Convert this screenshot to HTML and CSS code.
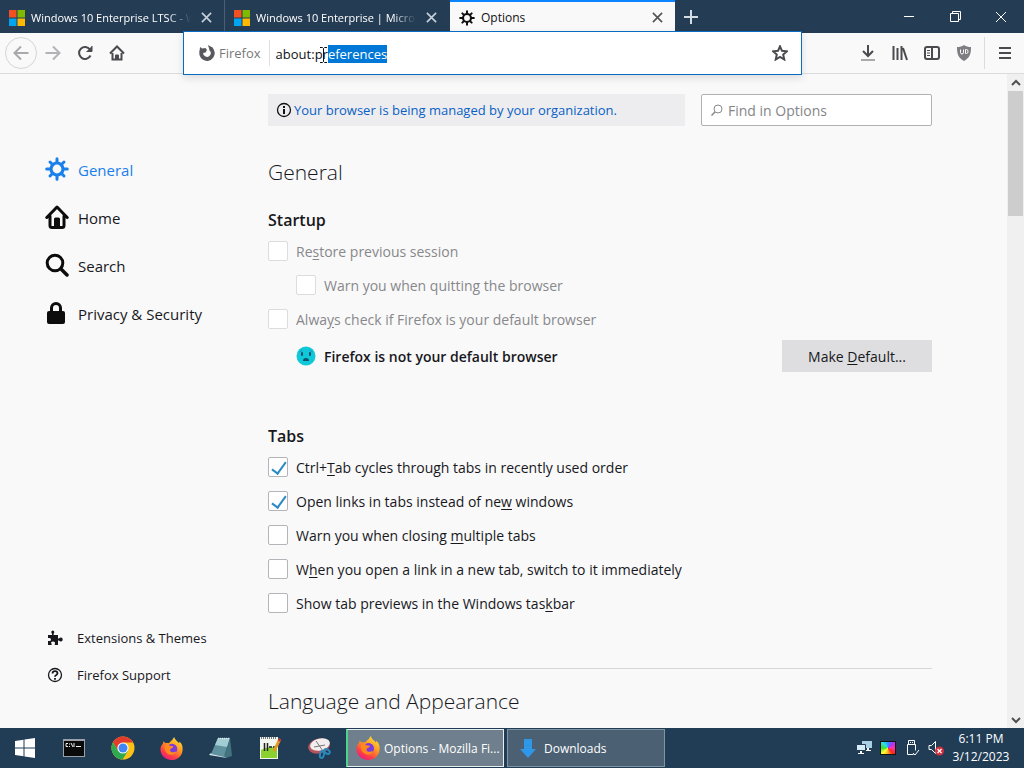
FILE: index.html
```html
<!DOCTYPE html>
<html lang="en">

<head>
  <meta charset="UTF-8">
  <meta name="viewport" content="width=device-width, initial-scale=1.0">
  <title>Options</title>
  <link rel="stylesheet" href="styles.css">
</head>

<body>
  <svg class="symbols" aria-hidden="true">
    <symbol id="ms" viewBox="0 0 16 16">
      <path fill="#f25022" d="M0 0h7.5v7.5H0z"/><path fill="#7fba00" d="M8.500 0H16v7.500H8.500z"/>
      <path fill="#00a4ef" d="M0 8.500h7.500V16H0z"/><path fill="#ffb900" d="M8.500 8.500H16V16H8.500z"/>
    </symbol>
    <symbol id="gear" viewBox="0 0 24 24">
      <g fill="none" stroke="currentColor" stroke-linecap="round">
        <circle cx="12" cy="12" r="6" stroke-width="3.200"/>
        <path stroke-width="3" d="M12 1.700v3M12 19.300v3M1.700 12h3M19.300 12h3M5 5l2 2M17 17l2 2M5 19l2-2M17 7l2-2"/>
      </g>
    </symbol>
    <symbol id="x" viewBox="0 0 12 12">
      <path fill="none" stroke="currentColor" stroke-width="1.800" d="M1 1l10 10M11 1L1 11"/>
    </symbol>
    <symbol id="house" viewBox="0 0 24 24">
      <path fill="none" stroke="currentColor" stroke-width="3" stroke-linecap="round" stroke-linejoin="round" d="M1.800 12.500L12 2l10.200 10.500M5 11v9.500q0 2 2 2h10q2 0 2-2V11"/>
      <path fill="currentColor" d="M9 22v-8q0-1.500 1.500-1.500h3q1.500 0 1.500 1.500v8z"/>
    </symbol>
    <symbol id="firefox" viewBox="0 0 24 24">
      <linearGradient id="fire" x1=".8" y1="0" x2=".2" y2="1">
        <stop offset="0" stop-color="#ffe43a"/><stop offset=".4" stop-color="#ff9a1f"/><stop offset=".75" stop-color="#ff3b4a"/><stop offset="1" stop-color="#e01a8a"/>
      </linearGradient>
      <path fill="url(#fire)" d="M4 4.500c.5 1 1 1.500 2 2 1-.3 2-.3 3 0 1.500-1 2.500-3 4-3.500 0-1 1-2 2-3 .2 3 3 4 5 6.500.3-.6.3-1.200.2-1.800C23 7 24 10 23.500 14 23 20 18 24 12 24S.5 19.500.5 13c0-3 1.200-4.500 2.500-6 .1-1 .4-2 1-2.500z"/>
      <circle cx="12.500" cy="12.500" r="5.500" fill="#7b3be0"/>
      <path fill="#ff8a1c" d="M5 9c2-1.500 4-1 5.500.2 1.500.3 3 .3 3.500 1-.5 1.300-2 1.500-3 2.300-1 1-.6 3 1.600 3.300 2.400.2 3.500-1 4.400-.3-.8 2.500-3.500 3.500-6 3C6.500 18 4 13 5 9z"/>
    </symbol>
  </svg>

  <header class="tab-strip">
    <div class="tab">
      <svg class="favicon"><use href="#ms"/></svg>
      <span class="tab-title faded">Windows 10 Enterprise LTSC - W</span>
      <button type="button" class="tab-close" aria-label="Close tab"><svg><use href="#x"/></svg></button>
    </div>
    <div class="tab">
      <svg class="favicon"><use href="#ms"/></svg>
      <span class="tab-title faded">Windows 10 Enterprise | Micros</span>
      <button type="button" class="tab-close" aria-label="Close tab"><svg><use href="#x"/></svg></button>
    </div>
    <div class="tab active">
      <svg class="favicon"><use href="#gear"/></svg>
      <span class="tab-title">Options</span>
      <button type="button" class="tab-close" aria-label="Close tab"><svg><use href="#x"/></svg></button>
    </div>
    <button type="button" class="new-tab" aria-label="New tab">
      <svg width="14" height="14"><path stroke="currentColor" stroke-width="2" d="M7 0v14M0 7h14"/></svg>
    </button>
    <div class="window-controls">
      <button type="button" aria-label="Minimize"><svg width="10" height="10"><path d="M0 4.500h10"/></svg></button>
      <button type="button" aria-label="Restore"><svg width="11" height="11"><path d="M.5 2.500h8v8h-8zM2.500 2.500v-2h8v8h-2"/></svg></button>
      <button type="button" aria-label="Close"><svg width="10" height="10"><path d="M0 0l10 10M10 0L0 10"/></svg></button>
    </div>
  </header>

  <nav class="toolbar">
    <button type="button" class="tool back" aria-label="Back">
      <svg width="16" height="16"><path d="M15.500 8H1.500M8 1.500L1.500 8 8 14.500"/></svg>
    </button>
    <button type="button" class="tool forward" aria-label="Forward">
      <svg width="16" height="16"><path d="M.5 8h14M8 1.500L14.500 8 8 14.500"/></svg>
    </button>
    <button type="button" class="tool" aria-label="Reload">
      <svg width="16" height="16"><path d="M13 4.500A6 6 0 1 0 13.500 10.500"/><path d="M15 1v5.500H9.500" fill="currentColor" stroke-width="1"/></svg>
    </button>
    <button type="button" class="tool" aria-label="Home">
      <svg width="16" height="16"><path d="M1 8.500L8 1.500l7 7M3.500 8v6.500h9V8"/><path d="M6.500 14v-4h3v4z" fill="currentColor" stroke-width="1"/></svg>
    </button>
    <div class="url-bar">
      <svg class="identity-icon" width="16" height="16" viewBox="0 0 16 16">
        <path fill="none" stroke="currentColor" stroke-width="4" d="M3 5.500A5.700 5.700 0 1 0 11.500 3.700"/>
        <path fill="currentColor" d="M1 2l2 1.500L6.500 3 8 5 6.500 7.500 4 8 .5 7zM9 0l4.500 2.500 1 3.500-4-1z"/>
      </svg>
      <span class="identity-label">Firefox</span>
      <div class="url-field">
        <input type="text" id="url" value="about:preferences" aria-label="Address" spellcheck="false">
        <svg class="ibeam" width="9" height="18"><path d="M1 1.500h2.500l1 1 1-1H8M4.500 2.500v13M1 16.500h2.500l1-1 1 1H8"/></svg>
      </div>
      <button type="button" class="tool star" aria-label="Bookmark this page">
        <svg width="16" height="16"><path d="M8 1.300l2 4.500 4.900.5-3.700 3.300 1.100 4.900L8 12l-4.300 2.500 1.100-4.900L1.100 6.300 6 5.800z"/></svg>
      </button>
    </div>
    <button type="button" class="tool" aria-label="Downloads">
      <svg width="16" height="18"><path d="M8 1v11M3 7l5 5 5-5"/><path stroke="#aaa" d="M1 16h14"/></svg>
    </button>
    <button type="button" class="tool" aria-label="Library">
      <svg width="16" height="16"><path d="M1.500 1v14M5.500 3v12M9.500 1v14M11 3l4 12"/></svg>
    </button>
    <button type="button" class="tool" aria-label="Sidebars">
      <svg width="16" height="16"><rect x="1" y="2" width="14" height="12" rx="2"/><path d="M8 2v12"/><path stroke-width="1" d="M3 5.500h3M3 8h3M3 10.500h3"/></svg>
    </button>
    <button type="button" class="tool" aria-label="uBlock Origin">
      <svg width="16" height="16"><path fill="#7d7d82" stroke="none" d="M8 0c2 1.500 4 2 7 2 0 7-1 10.500-7 14C2 12.500 1 9 1 2c3 0 5-.5 7-2z"/><path stroke="#fff" stroke-width="1" d="M4.500 4.500v3q0 1.500 1.500 1.500T7.500 7.500v-3M9.500 4.500v4h1q1.500 0 1.500-2t-1.500-2z"/></svg>
    </button>
    <button type="button" class="tool menu" aria-label="Open menu">
      <svg width="12" height="14"><path d="M0 2h12M0 7h12M0 12h12"/></svg>
    </button>
  </nav>

  <div class="page">
    <aside class="categories">
      <a href="#general" class="category selected"><svg><use href="#gear"/></svg>General</a>
      <a href="#home" class="category"><svg><use href="#house"/></svg>Home</a>
      <a href="#search" class="category">
        <svg viewBox="0 0 24 24"><g fill="none" stroke="currentColor" stroke-width="3" stroke-linecap="round"><circle cx="10" cy="10" r="7.800"/><path stroke-width="3.500" d="M16 16l6 6"/></g></svg>Search
      </a>
      <a href="#privacy" class="category">
        <svg viewBox="0 0 24 24"><rect x="2" y="10" width="18" height="13" rx="2" fill="currentColor"/><path fill="none" stroke="currentColor" stroke-width="3" d="M6.500 11V7a4.500 4.500 0 0 1 9 0v4"/></svg>Privacy &amp; Security
      </a>
      <div class="support-links">
        <a href="#addons">
          <svg viewBox="0 0 16 16"><path fill="currentColor" d="M1 5h4V3.800Q4.300 3 4.300 2 4.300.5 5.800.5T7.300 2q0 1-.7 1.800V5H11v3.500h1Q12.700 7.500 14 7.500q1.700 0 1.700 2t-1.700 2q-1.300 0-2-1h-1V15H7.800v-1.300Q8.300 13 7.800 12.300T6 11.600t-1.800.7.400 1.400V15H1v-4h1.500q1.500 0 1.500-1.500T2.500 8H1z"/></svg>Extensions &amp; Themes
        </a>
        <a href="#support">
          <svg viewBox="0 0 16 16"><g fill="none" stroke="currentColor"><circle cx="8" cy="8" r="6.500" stroke-width="1.300"/><path stroke-width="1.800" d="M5.500 6.500Q5.600 4.200 8 4.200t2.500 2.100Q10.500 7.500 9 8.200 8 8.700 8 9.800M8 11v1.700"/></g></svg>Firefox Support
        </a>
      </div>
    </aside>

    <main class="pane">
      <div class="pane-top">
        <div class="policy-notice">
          <svg width="16" height="16" viewBox="0 0 16 16"><circle cx="8" cy="8" r="6.500" fill="none" stroke="#111" stroke-width="1.300"/><path stroke="#111" stroke-width="2" d="M8 7v5M8 4v2"/></svg>
          <a href="#policies">Your browser is being managed by your organization.</a>
        </div>
        <label class="find">
          <svg width="12" height="12"><g fill="none" stroke="#888"><circle cx="7" cy="5" r="4"/><path stroke-width="1.500" d="M4 8l-3.500 3.500"/></g></svg>
          <input type="text" placeholder="Find in Options" aria-label="Find in Options">
        </label>
      </div>

      <h1 id="general">General</h1>

      <section>
        <h2>Startup</h2>
        <label class="check"><input type="checkbox" disabled><span>Re<u>s</u>tore previous session</span></label>
        <label class="check indent"><input type="checkbox" disabled><span>Warn you when quitting the browser</span></label>
        <label class="check"><input type="checkbox" disabled><span>Alwa<u>y</u>s check if Firefox is your default browser</span></label>
        <div class="default-row">
          <svg width="20" height="20"><circle cx="10" cy="10" r="9.500" fill="#10c9d8"/><path stroke="#14506e" stroke-width="2" stroke-linecap="round" fill="none" d="M6 7v2M14 7v2"/><path fill="#14506e" d="M7 15q0-3 3-3t3 3z"/><path stroke="#1a8fc4" fill="none" d="M3.500 6l3-2M16.500 6l-3-2"/></svg>
          <strong>Firefox is not your default browser</strong>
          <button type="button" class="make-default">Make <u>D</u>efault...</button>
        </div>
      </section>

      <section>
        <h2>Tabs</h2>
        <label class="check"><input type="checkbox" checked><span>Ctrl+<u>T</u>ab cycles through tabs in recently used order</span></label>
        <label class="check"><input type="checkbox" checked><span>Open links in tabs instead of ne<u>w</u> windows</span></label>
        <label class="check"><input type="checkbox"><span>Warn you when closing <u>m</u>ultiple tabs</span></label>
        <label class="check"><input type="checkbox"><span>W<u>h</u>en you open a link in a new tab, switch to it immediately</span></label>
        <label class="check"><input type="checkbox"><span>Show tab previews in the Windows tas<u>k</u>bar</span></label>
      </section>

      <h1 class="divided">Language and Appearance</h1>
    </main>

    <div class="scrollbar">
      <svg width="10" height="16"><path d="M1 10l4-4 4 4"/></svg>
      <div class="thumb"></div>
      <svg width="10" height="16"><path d="M1 6l4 4 4-4"/></svg>
    </div>
  </div>

  <footer class="taskbar">
    <button type="button" class="launcher" aria-label="Start">
      <svg width="20" height="20"><path fill="#fff" d="M0 3l8.500-1.200v7.700H0zM9.500 1.600L20 0v9.500H9.500zM0 10.500h8.500v7.700L0 17zM9.500 10.500H20V20L9.500 18.400z"/></svg>
    </button>
    <button type="button" class="launcher" aria-label="Command Prompt">
      <svg width="22" height="20"><path fill="#9aa1a8" d="M0 1h22v18H0z"/><path fill="#0a0a0a" d="M1 3h20v15H1z"/><path stroke="#eee" fill="none" d="M5 5.500H3v3h2M6.500 5.500v1M6.500 8v1M8 5l2 4M11 5v4M13 8.500h5"/></svg>
    </button>
    <button type="button" class="launcher" aria-label="Google Chrome">
      <svg width="24" height="24" viewBox="0 0 24 24"><circle cx="12" cy="12" r="11.500" fill="#fbc116"/><path fill="#e33b2e" d="M2 6.300A11.500 11.500 0 0 1 22 6.500H12L7 15z"/><path fill="#2da94f" d="M2 6.300A11.500 11.500 0 0 0 11.500 23.500L17 15l-10 0z"/><circle cx="12" cy="12" r="5.600" fill="#fff"/><circle cx="12" cy="12" r="4.500" fill="#4285f4"/></svg>
    </button>
    <button type="button" class="launcher" aria-label="Firefox"><svg width="23" height="23"><use href="#firefox"/></svg></button>
    <button type="button" class="launcher" aria-label="Notepad">
      <svg width="24" height="22"><path fill="#dcecef" d="M0 18l2-2 12 1 4 4z"/><path fill="#5f929e" d="M2 17L9 1h12l-6 19z"/><path fill="#a3cdd4" d="M9 1h12l-3 9-12-2z"/><path fill="#447380" d="M21 1l2 18-6 2-2-1z"/><path stroke="#d5e9ec" stroke-width="1.500" stroke-dasharray="1 1" d="M9 1.500h12"/></svg>
    </button>
    <button type="button" class="launcher" aria-label="Notepad++">
      <svg width="22" height="24"><path fill="#f3f6ef" d="M1 1h18v22H1z"/><path fill="#8bd12f" d="M2 14q8-5 16-2v10H2z"/><path stroke="#777" stroke-dasharray="1 1" stroke-width="2" d="M2 2h16"/><path stroke="#222" stroke-width="1.500" d="M5.500 7v8M8.500 7v8M10 11h3M14 11h3"/><path stroke="#e29a25" stroke-width="3" d="M21 3l-6 12"/><path stroke="#b33" stroke-width="3" d="M21 3l-1 2"/></svg>
    </button>
    <button type="button" class="launcher" aria-label="Snipping Tool">
      <svg width="24" height="24"><ellipse cx="12" cy="10" rx="11" ry="7.500" fill="#b8545c" transform="rotate(-14 12 10)"/><ellipse cx="13" cy="8.500" rx="10" ry="6" fill="#f2eef0" transform="rotate(-14 13 8.500)"/><path stroke="#777" d="M9 5l7 10M7 11l11-2"/><g fill="none" stroke="#2a89bd" stroke-width="2"><ellipse cx="15" cy="18.500" rx="2" ry="3.500" transform="rotate(15 15 18.500)"/><ellipse cx="20" cy="15.500" rx="3" ry="2" transform="rotate(35 20 15.500)"/></g></svg>
    </button>
    <div class="windows">
      <button type="button" class="window current"><svg width="24" height="24"><use href="#firefox"/></svg>Options - Mozilla Fi...</button>
      <button type="button" class="window"><svg width="24" height="24"><path fill="#2f96e8" d="M8 3h8v10h4l-8 9-8-9h4z"/></svg>Downloads</button>
    </div>
    <div class="tray">
      <svg width="16" height="16"><path fill="#a9cfe5" d="M6 1h10v7H6z"/><path fill="#d5ecf7" stroke="#213c55" d="M.5 4.500h9v6h-9z"/><path fill="#fff" d="M4 11h2v2h2v1H2v-1h2zM11 8h2v2h2v1h-5v-1h1z"/></svg>
      <div class="color-icon"></div>
      <svg width="16" height="18"><path fill="none" stroke="#fff" d="M4.500 5.500v-4h6v4M3.500 5.500h8v6M3.500 5.500v10h6M6 3.500h1M8 3.500h1M9 14l2 2 4-5"/></svg>
      <svg width="16" height="16"><path fill="none" stroke="#fff" d="M1 5.500h2.500l4-4v12l-4-4H1z"/><circle cx="11.500" cy="11" r="4.500" fill="#d22f3c"/><path stroke="#fff" stroke-width="1.300" d="M9.500 9l4 4M13.500 9l-4 4"/></svg>
    </div>
    <div class="clock"><span>6:11 PM</span><span>3/12/2023</span></div>
  </footer>

  <script>
    const url = document.getElementById('url');
    url.focus();
    url.setSelectionRange(8, url.value.length);
  </script>
</body>

</html>
```

FILE: styles.css
```css
* {
  box-sizing: border-box;
  margin: 0;
  padding: 0;
  font-family: "Open Sans", "Noto Sans", sans-serif;
}

body {
  display: flex;
  flex-direction: column;
  height: 100vh;
  background: #f9f9fa;
  color: #18181c;
  font-size: 14px;
  overflow: hidden;
}

button {
  display: flex;
  align-items: center;
  justify-content: center;
  border: none;
  background: none;
  color: inherit;
}

a {
  color: inherit;
  text-decoration: none;
}

svg {
  flex: none;
}

.symbols {
  position: absolute;
  width: 0;
  height: 0;
}

/* tabs */
.tab-strip {
  display: flex;
  flex: none;
  height: 33px;
  background: #253d54;
  color: #fff;
}

.tab {
  display: flex;
  align-items: center;
  flex: 0 1 225px;
  min-width: 0;
  padding: 2px 12px 0 9px;
  border-right: 1px solid #4b6074;
}

.tab:nth-child(2) {
  border-right-color: transparent;
}

.tab.active {
  border-top: 2px solid #0a84ff;
  padding-top: 0;
  border-right: none;
  background: #f9f9fa;
  color: #111;
}

.favicon {
  width: 16px;
  height: 16px;
}

.tab-title {
  flex: 1;
  margin: 0 4px 0 6px;
  font-size: 12px;
  white-space: nowrap;
  overflow: hidden;
}

.tab-title.faded {
  font-size: 11px;
  mask-image: linear-gradient(to left, transparent 5px, #000 28px);
}

.tab-close {
  width: 12px;
  height: 12px;
  color: #c5d0da;
}

.active .tab-close {
  color: #555;
}

.tab-close svg {
  width: 11px;
  height: 11px;
}

.new-tab {
  width: 32px;
  color: #d5dde4;
}

.window-controls {
  display: flex;
  margin-left: auto;
}

.window-controls button {
  width: 46px;
}

.window-controls path {
  fill: none;
  stroke: #fff;
}

/* toolbar */
.toolbar {
  display: flex;
  align-items: center;
  flex: none;
  height: 41px;
  padding: 0 3px 0 5px;
  border-bottom: 1px solid #dcdcde;
  color: #4a4a4f;
}

.tool {
  flex: none;
  width: 32px;
  height: 32px;
}

.tool path,
.tool rect {
  fill: none;
  stroke: currentColor;
  stroke-width: 2;
}

.tool path[fill] {
  fill: currentColor;
}

.tool path[fill="#7d7d82"] {
  fill: #7d7d82;
  stroke: none;
}

.tool path[stroke="#fff"] {
  stroke: #fff;
  stroke-width: 1;
}

.tool path[stroke="#aaa"] {
  stroke: #aaa;
}

.tool path[stroke-width="1"] {
  stroke-width: 1;
}

.back {
  border: 1px solid #d5d5d8;
  border-radius: 50%;
  color: #a9a9ad;
}

.forward {
  color: #b3b3b6;
}

.menu {
  position: relative;
  margin-left: 9px;
}

.menu::before {
  content: "";
  position: absolute;
  left: -5px;
  height: 32px;
  border-left: 1px solid #dcdcde;
}

.url-bar {
  position: relative;
  z-index: 1;
  display: flex;
  align-items: center;
  flex: 1;
  height: 44px;
  margin: 0 50px;
  padding: 0 5px 0 15px;
  border: 1px solid #0a6cc0;
  background: #fff;
  box-shadow: 0 3px 8px rgba(0, 0, 0, .12);
}

.identity-icon {
  color: #5a5a5e;
}

.identity-label {
  margin-left: 4px;
  padding-right: 8px;
  border-right: 1px solid #e0e0e2;
  color: #777;
  font-size: 13px;
  line-height: 26px;
}

.url-field {
  position: relative;
  flex: 1;
  margin-left: 6px;
}

.url-field input {
  display: block;
  width: 100%;
  padding-top: 1px;
  border: none;
  outline: none;
  background: none;
  color: #111;
  caret-color: transparent;
  font-size: 13px;
}

.url-field input::selection {
  background: #0078d7;
  color: #fff;
}

.ibeam {
  position: absolute;
  left: 43px;
  top: 2px;
  fill: none;
  stroke: #111;
}

/* page */
.page {
  display: flex;
  flex: 1;
  min-height: 0;
}

.categories {
  display: flex;
  flex-direction: column;
  flex: none;
  width: 268px;
  padding: 72px 0 35px 45px;
}

.category {
  display: flex;
  align-items: center;
  gap: 9px;
  height: 48px;
  font-size: 15px;
}

.category svg {
  width: 24px;
  height: 24px;
  margin-bottom: 3px;
  color: #0c0c0d;
}

.category.selected,
.category.selected svg {
  color: #1a80ea;
}

.support-links {
  margin-top: auto;
}

.support-links a {
  display: flex;
  align-items: center;
  gap: 14px;
  height: 37px;
  padding-left: 2px;
  font-size: 13px;
}

.support-links svg {
  width: 16px;
  height: 16px;
}

.pane {
  flex: 0 1 664px;
  min-width: 0;
  padding-top: 20px;
  overflow: hidden;
}

.pane-top {
  display: flex;
  gap: 16px;
  height: 32px;
  margin-bottom: 31px;
}

.policy-notice {
  display: flex;
  align-items: center;
  flex: 1;
  gap: 2px;
  padding-left: 8px;
  background: #ededf0;
  color: #0a5fc4;
  font-size: 13px;
}

.find {
  display: flex;
  align-items: center;
  gap: 5px;
  width: 231px;
  padding: 0 9px;
  border: 1px solid #b1b1b5;
  border-radius: 2px;
  background: #fff;
}

.find input {
  flex: 1;
  min-width: 0;
  border: none;
  outline: none;
  background: none;
  font-size: 14px;
}

.find input::placeholder {
  color: #858588;
}

h1 {
  font-size: 21px;
  font-weight: 300;
  line-height: 30px;
}

h2 {
  margin: 21px 0 2px;
  font-size: 16px;
  font-weight: 600;
  line-height: 24px;
}

section + section h2 {
  margin-top: 52px;
}

.check {
  display: flex;
  align-items: center;
  gap: 8px;
  height: 34px;
}

.check.indent {
  padding-left: 28px;
}

.check input {
  appearance: none;
  width: 20px;
  height: 20px;
  border: 1px solid #b5b5b9;
  border-radius: 2px;
  background: #fff;
}

.check input:checked::before {
  content: "";
  display: block;
  width: 6px;
  height: 13px;
  margin: 1px 0 0 6px;
  border: solid #2a8ac4;
  border-width: 0 2px 2px 0;
  transform: rotate(36deg);
}

.check input:disabled {
  border-color: #dcdcde;
}

.check input:disabled + span {
  color: #88888a;
}

u {
  text-underline-offset: 2px;
}

.default-row {
  display: flex;
  align-items: center;
  gap: 8px;
  height: 32px;
  margin-top: 4px;
  padding-left: 28px;
}

.default-row strong {
  font-weight: 600;
}

.make-default {
  display: block;
  width: 150px;
  height: 32px;
  margin-left: auto;
  background: #dedee0;
  font-size: 14px;
}

.divided {
  margin-top: 48px;
  padding-top: 17px;
  border-top: 1px solid #d7d7db;
}

.scrollbar {
  display: flex;
  flex-direction: column;
  align-items: center;
  width: 17px;
  margin-left: auto;
  padding: 1px 0 0;
  background: #f0f0f0;
}

.scrollbar svg {
  fill: none;
  stroke: #505050;
  stroke-width: 2;
}

.thumb {
  width: 15px;
  height: 125px;
  margin-bottom: auto;
  background: #cdcdcd;
}

/* taskbar */
.taskbar {
  display: flex;
  align-items: center;
  flex: none;
  height: 40px;
  background: #213c55;
  color: #fff;
  font-size: 12px;
}

.launcher {
  width: 49px;
  height: 40px;
}

.windows {
  display: flex;
  gap: 3px;
  margin-left: 3px;
}

.window {
  justify-content: flex-start;
  gap: 4px;
  width: 158px;
  height: 38px;
  padding-left: 8px;
  border: 1px solid #8194a4;
  background: #4b6072;
  font-size: 12px;
  white-space: nowrap;
}

.window.current {
  border-color: #e8edf0;
  border-left: 2px solid #4ed487;
  background: #6f7f8d;
}

.tray {
  display: flex;
  align-items: center;
  gap: 8px;
  margin-left: auto;
}

.color-icon {
  width: 16px;
  height: 14px;
  border: 1px solid #111;
  background: conic-gradient(#29f, #a3f, #f3a, #f22, #fa2, #ff3, #3d3, #3dd, #29f);
}

.clock {
  display: flex;
  flex-direction: column;
  align-items: center;
  width: 74px;
  margin-right: 6px;
  line-height: 18px;
}
```
